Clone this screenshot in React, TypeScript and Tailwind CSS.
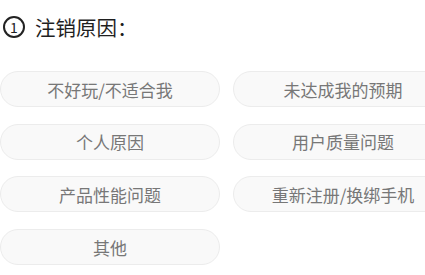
const reasons = [
  "不好玩/不适合我",
  "未达成我的预期",
  "个人原因",
  "用户质量问题",
  "产品性能问题",
  "重新注册/换绑手机",
  "其他",
];

export default function App() {
  return (
    <div
      className="w-[425px] h-[275px] overflow-hidden bg-white"
      style={{ fontFamily: '"Noto Sans CJK SC", "Noto Sans", sans-serif' }}
    >
      {/* Title */}
      <div className="flex items-center pt-[15px] pl-[3px] h-[38px]">
        <span className="flex items-center justify-center w-[22px] h-[22px] rounded-full border-2 border-[#222] text-[14px] leading-none text-[#222]">
          1
        </span>
        <span className="ml-[10px] text-[20.5px] leading-[24px] text-[#1f1f1f]">注销原因：</span>
      </div>

      {/* Options */}
      <div className="grid grid-cols-[220px_220px] gap-x-[13px] gap-y-[16.7px] mt-[33px] w-[453px]">
        {reasons.map((r) => (
          <button
            key={r}
            className="h-[36px] rounded-full border border-[#ececec] bg-[#f9f9f9] text-[17px] leading-none text-[#777] whitespace-nowrap"
          >
            {r}
          </button>
        ))}
      </div>
    </div>
  );
}
